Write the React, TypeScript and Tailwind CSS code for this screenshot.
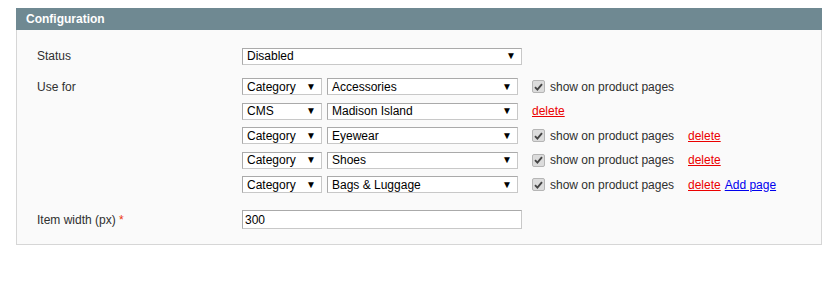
const font = { fontFamily: '"Liberation Sans", Arial, sans-serif' };

function Select({ value, w }: { value: string; w: string }) {
  return (
    <div
      className={`${w} h-[17px] flex items-center justify-between bg-white border border-[#aaa] border-r-[#c8c8c8] border-b-[#c8c8c8] pl-[4px] pr-[5px] text-[12px] text-black`}
    >
      <span className="leading-none">{value}</span>
      <span className="text-[10px] leading-none">▼</span>
    </div>
  );
}

function Check() {
  return (
    <span className="w-[13px] h-[13px] rounded-[2px] border border-[#b5b5b5] bg-[#dcdcdc] flex items-center justify-center">
      <svg width="9" height="8" viewBox="0 0 9 8">
        <path d="M1 4.2 L3.4 6.6 L8 1.2" fill="none" stroke="#444" strokeWidth="1.9" />
      </svg>
    </span>
  );
}

function Del() {
  return <a className="text-[#eb0000] underline cursor-pointer">delete</a>;
}

const rows = [
  { type: "Category", page: "Accessories", check: true, del: false, add: false },
  { type: "CMS", page: "Madison Island", check: false, del: true, add: false },
  { type: "Category", page: "Eyewear", check: true, del: true, add: false },
  { type: "Category", page: "Shoes", check: true, del: true, add: false },
  { type: "Category", page: "Bags & Luggage", check: true, del: true, add: true },
];

export default function App() {
  return (
    <div className="w-[839px] h-[302px] bg-white pt-[8px] pl-[16px]" style={font}>
      <div className="w-[806px]">
        <div className="h-[22px] bg-[#6f8992] pl-[10px] flex items-center">
          <h4 className="text-white font-bold text-[12px]">Configuration</h4>
        </div>
        <div className="bg-[#fafafa] border border-t-0 border-[#d6d6d6] pl-[20px] pt-[17px] pb-[15px] text-[12px] text-[#2f2f2f]">
          <div className="flex items-center">
            <div className="w-[205px]">Status</div>
            <Select value="Disabled" w="w-[280px]" />
          </div>

          <div className="flex mt-[13px]">
            <div className="w-[205px] h-[17px] flex items-center">Use for</div>
            <div className="flex flex-col gap-[7.5px]">
              {rows.map((r, i) => (
                <div key={i} className="flex items-center h-[17px]">
                  <Select value={r.type} w="w-[80px]" />
                  <div className="ml-[5px]">
                    <Select value={r.page} w="w-[191px]" />
                  </div>
                  <div className="ml-[14px] flex items-center">
                    {r.check ? (
                      <>
                        <Check />
                        <span className="ml-[5px] w-[138px]">show on product pages</span>
                      </>
                    ) : null}
                    {r.del && <Del />}
                    {r.add && (
                      <a className="ml-[4px] text-[#0000ee] underline cursor-pointer">Add page</a>
                    )}
                  </div>
                </div>
              ))}
            </div>
          </div>

          <div className="flex items-center mt-[17px]">
            <div className="w-[205px]">
              Item width (px) <span className="text-[#eb340a]">*</span>
            </div>
            <div className="w-[280px] h-[19px] bg-white border border-[#aaa] border-r-[#c8c8c8] border-b-[#c8c8c8] pl-[2px] flex items-center text-black">
              300
            </div>
          </div>
        </div>
      </div>
    </div>
  );
}
